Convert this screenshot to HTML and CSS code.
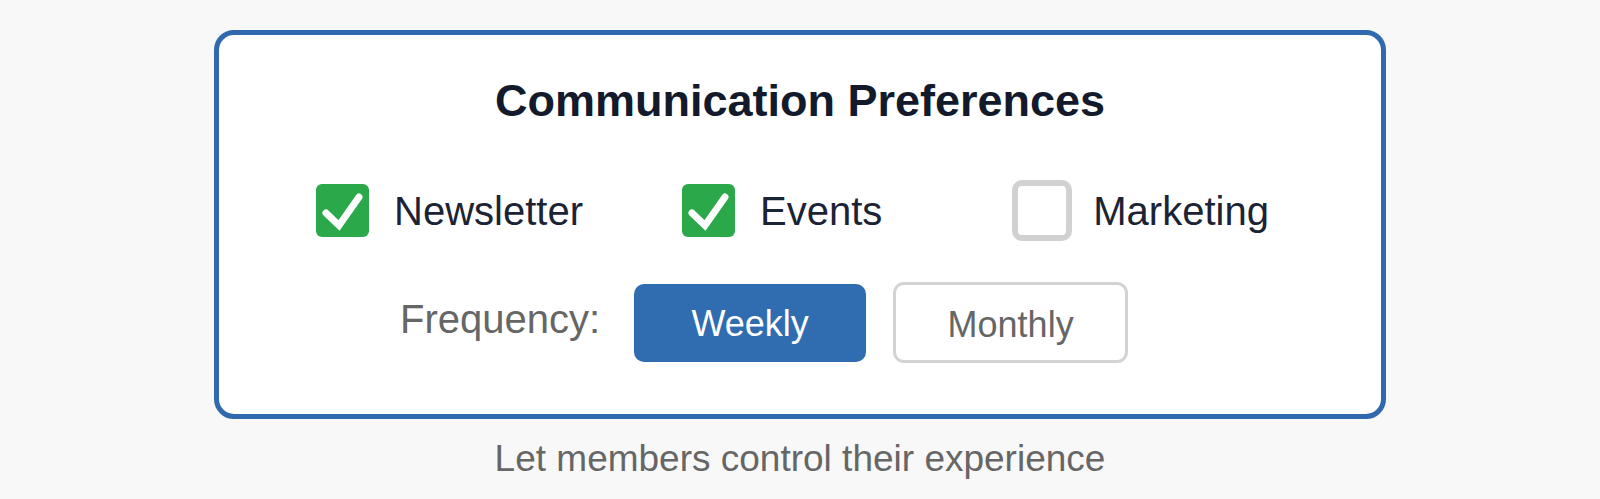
FILE: index.html
```html
<!DOCTYPE html>
<html lang="en">
<head>
<meta charset="utf-8">
<title>Communication Preferences</title>
<link rel="stylesheet" href="styles.css">
</head>
<body>
<main class="page">
  <section class="card">
    <h1 class="title">Communication Preferences</h1>
    <div class="options">
      <label class="option">
        <span class="box box-checked">
          <svg viewBox="0 0 53 53" width="53" height="53" aria-hidden="true"><path d="M10 29 L23 41.5 L43 13" fill="none" stroke="#fff" stroke-width="7" stroke-linecap="round" stroke-linejoin="miter"/></svg>
        </span>
        <span class="option-text">Newsletter</span>
      </label>
      <label class="option">
        <span class="box box-checked">
          <svg viewBox="0 0 53 53" width="53" height="53" aria-hidden="true"><path d="M10 29 L23 41.5 L43 13" fill="none" stroke="#fff" stroke-width="7" stroke-linecap="round" stroke-linejoin="miter"/></svg>
        </span>
        <span class="option-text">Events</span>
      </label>
      <label class="option option-last">
        <span class="box box-empty"></span>
        <span class="option-text">Marketing</span>
      </label>
    </div>
    <div class="frequency">
      <span class="freq-label">Frequency:</span>
      <button class="btn btn-active" type="button">Weekly</button>
      <button class="btn btn-outline" type="button">Monthly</button>
    </div>
  </section>
  <p class="caption">Let members control their experience</p>
</main>
</body>
</html>
```

FILE: styles.css
```css
html, body {
  margin: 0;
  padding: 0;
}

body {
  background: #f8f8f8;
  font-family: "Liberation Sans", Arial, Helvetica, sans-serif;
  width: 1600px;
  height: 499px;
  overflow: hidden;
}

.page {
  display: flex;
  flex-direction: column;
  align-items: center;
  padding-top: 30px;
}

.card {
  box-sizing: border-box;
  width: 1172px;
  height: 389px;
  background: #ffffff;
  border: 5px solid #3169ae;
  border-radius: 20px;
  padding-top: 40px;
  display: flex;
  flex-direction: column;
}

.title {
  margin: 0;
  font-size: 45px;
  line-height: 52px;
  font-weight: 700;
  color: #121a2c;
  text-align: center;
  letter-spacing: 0;
}

.options {
  display: flex;
  align-items: center;
  height: 61px;
  margin-top: 53px;
  padding-left: 97px;
  gap: 99px;
}

.option {
  display: flex;
  align-items: center;
  gap: 25px;
}

.option-last {
  margin-left: 31px;
  gap: 21px;
}

.box {
  box-sizing: border-box;
  display: flex;
  align-items: center;
  justify-content: center;
}

.box-checked {
  width: 53px;
  height: 53px;
  background: #2aa84a;
  border-radius: 6px;
}

.box-checked svg {
  display: block;
}

.box-empty {
  width: 60px;
  height: 61px;
  border: 6px solid #d1d1d1;
  border-radius: 10px;
  background: #fff;
}

.option-text {
  font-size: 40px;
  line-height: 46px;
  color: #1b2335;
}

.frequency {
  display: flex;
  align-items: center;
  margin-top: 41px;
  padding-left: 181px;
}

.freq-label {
  font-size: 40px;
  line-height: 46px;
  color: #666666;
  margin-right: 34px;
  margin-bottom: 8px;
}

.btn {
  box-sizing: border-box;
  font-family: "Liberation Sans", Arial, Helvetica, sans-serif;
  font-size: 36px;
  line-height: 40px;
  padding: 0;
  cursor: pointer;
  display: flex;
  align-items: center;
  justify-content: center;
}

.btn-active {
  width: 232px;
  height: 78px;
  background: #2f6cb0;
  color: #ffffff;
  border: none;
  border-radius: 10px;
  margin-right: 27px;
  padding-top: 2px;
}

.btn-outline {
  width: 235px;
  height: 81px;
  background: #ffffff;
  color: #666666;
  border: 3px solid #d3d3d3;
  border-radius: 11px;
  padding-top: 4px;
}

.caption {
  margin: 18px 0 0 0;
  font-size: 37px;
  line-height: 44px;
  color: #666666;
  text-align: center;
}
```
